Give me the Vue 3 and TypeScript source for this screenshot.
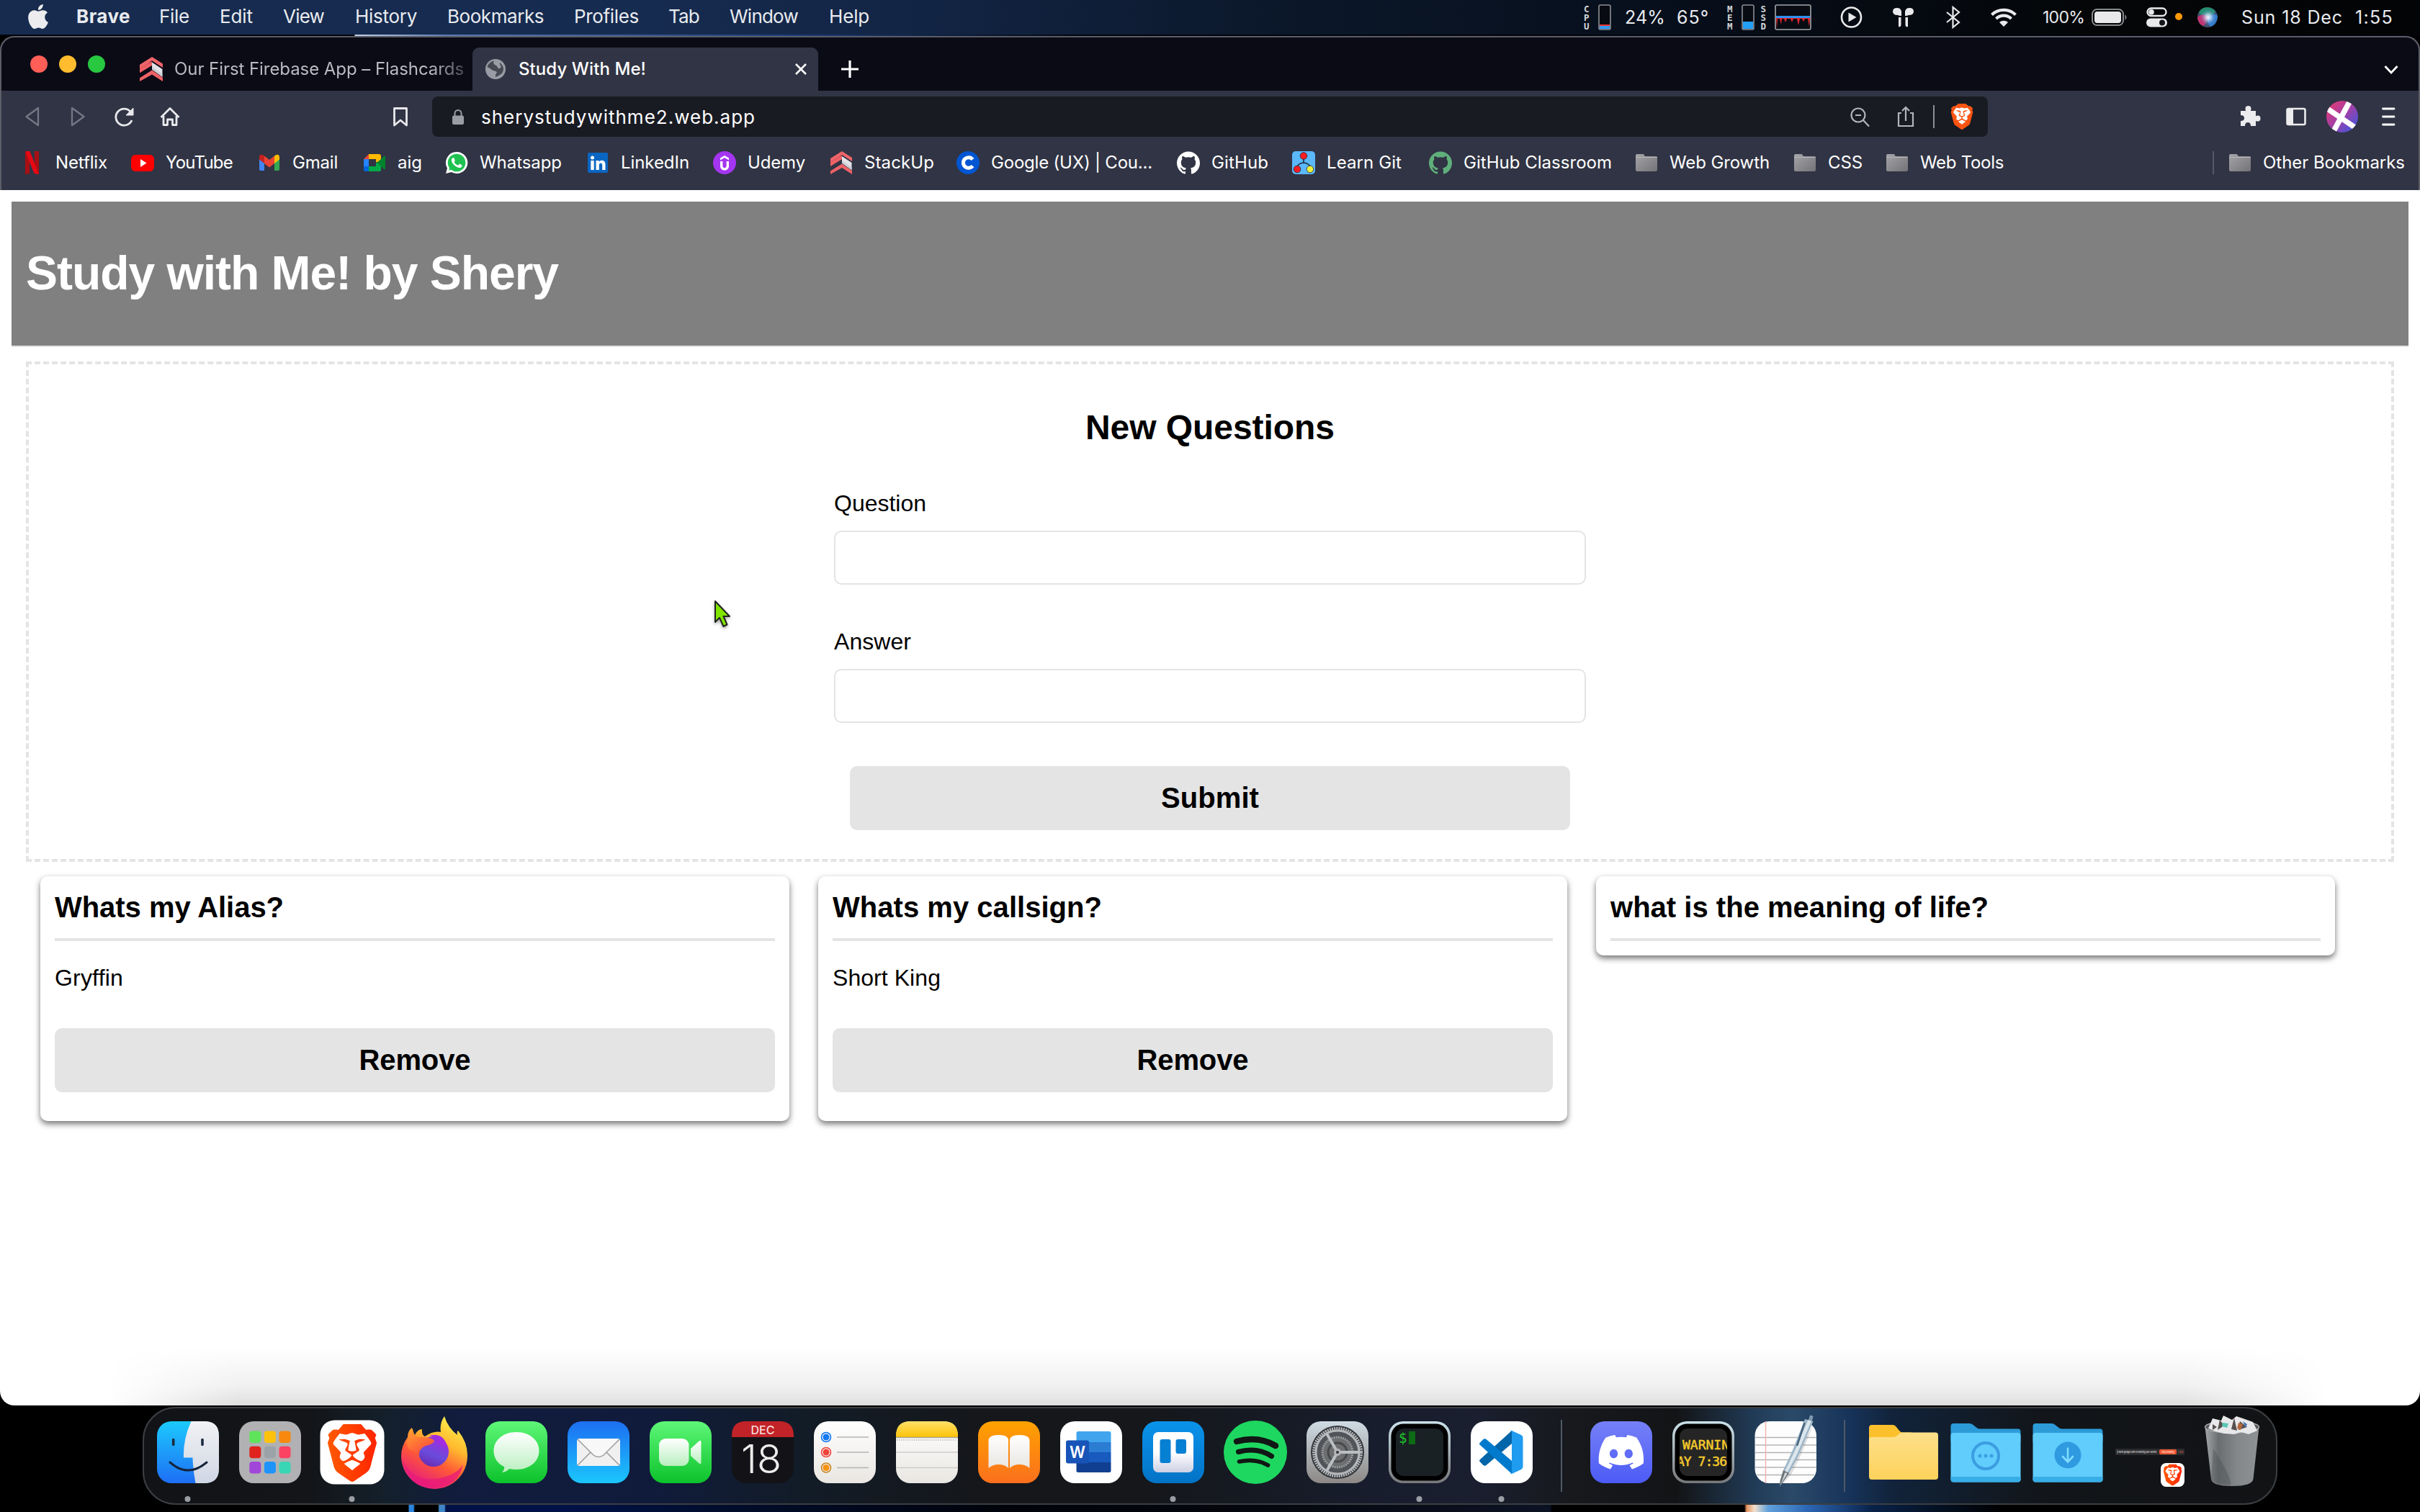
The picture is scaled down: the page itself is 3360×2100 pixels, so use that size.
<script setup lang="ts">
import type { Directive } from 'vue'

interface MenuItem { label: string; width: number; slot: number }
interface Bookmark { label: string; icon: string; width: number; slot: number }
interface Flashcard { question: string; qWidth: number; answer?: string; aWidth?: number }

// Spreads a label over the given width by adjusting its tracking.
const vFit: Directive<HTMLElement, number> = {
  mounted(el, binding) {
    const count = (el.textContent ?? '').trim().length
    const actual = el.getBoundingClientRect().width
    if (count > 0) el.style.letterSpacing = `${(binding.value - actual) / count}px`
  },
}

const menus: MenuItem[] = [
  { label: 'File', width: 42, slot: 84 },
  { label: 'Edit', width: 46, slot: 88 },
  { label: 'View', width: 57, slot: 100 },
  { label: 'History', width: 86, slot: 128 },
  { label: 'Bookmarks', width: 134, slot: 176 },
  { label: 'Profiles', width: 90, slot: 131 },
  { label: 'Tab', width: 43, slot: 85 },
  { label: 'Window', width: 95, slot: 138 },
  { label: 'Help', width: 56, slot: 80 },
]

const bookmarks: Bookmark[] = [
  { label: 'Netflix', icon: 'netflix', width: 72, slot: 153 },
  { label: 'YouTube', icon: 'youtube', width: 93, slot: 176 },
  { label: 'Gmail', icon: 'gmail', width: 63, slot: 146 },
  { label: 'aig', icon: 'meet', width: 34, slot: 114 },
  { label: 'Whatsapp', icon: 'whatsapp', width: 114, slot: 196 },
  { label: 'LinkedIn', icon: 'linkedin', width: 95, slot: 176 },
  { label: 'Udemy', icon: 'udemy', width: 80, slot: 162 },
  { label: 'StackUp', icon: 'stackup', width: 97, slot: 176 },
  { label: 'Google (UX) | Cou...', icon: 'coursera', width: 224, slot: 306 },
  { label: 'GitHub', icon: 'github', width: 79, slot: 160 },
  { label: 'Learn Git', icon: 'learngit', width: 104, slot: 190 },
  { label: 'GitHub Classroom', icon: 'classroom', width: 206, slot: 286 },
  { label: 'Web Growth', icon: 'folder', width: 139, slot: 220 },
  { label: 'CSS', icon: 'folder', width: 48, slot: 128 },
  { label: 'Web Tools', icon: 'folder', width: 116, slot: 200 },
]

const cards: Flashcard[] = [
  { question: 'Whats my Alias?', qWidth: 318, answer: 'Gryffin', aWidth: 95 },
  { question: 'Whats my callsign?', qWidth: 374, answer: 'Short King', aWidth: 150 },
  { question: 'what is the meaning of life?', qWidth: 525 },
]

const tiles = [
  ['#5fe35a', '#fdc20d', '#f7890f'],
  ['#e0231d', '#9aa3a8', '#fb4262'],
  ['#a046d8', '#1e94fb', '#38d6b4'],
]
</script>

<template>
  <div class="desktop">
    <!-- shared glyphs -->
    <svg class="defs" width="0" height="0" aria-hidden="true">
      <defs>
        <linearGradient id="gGreen" x1="0" y1="0" x2="0" y2="1"><stop offset="0" stop-color="#5ef777" /><stop offset="1" stop-color="#0cc22b" /></linearGradient>
        <linearGradient id="gWhite" x1="0" y1="0" x2="0" y2="1"><stop offset="0" stop-color="#fff" /><stop offset="1" stop-color="#e9e6e2" /></linearGradient>
        <linearGradient id="gBubble" x1="0" y1="0" x2="0" y2="1"><stop offset="0" stop-color="#fff" /><stop offset="1" stop-color="#b9efbf" /></linearGradient>
        <linearGradient id="gMail" x1="0" y1="0" x2="0" y2="1"><stop offset="0" stop-color="#1d6ff2" /><stop offset="1" stop-color="#1bc6fd" /></linearGradient>
        <linearGradient id="gFinder" x1="0" y1="0" x2="0" y2="1"><stop offset="0" stop-color="#1ccafd" /><stop offset="1" stop-color="#1e6ef5" /></linearGradient>
        <linearGradient id="gFace" x1="0" y1="0" x2="0" y2="1"><stop offset="0" stop-color="#f2f2f4" /><stop offset="1" stop-color="#cfd6e4" /></linearGradient>
        <linearGradient id="gLion" x1="0" y1="0" x2="1" y2="0"><stop offset="0" stop-color="#ff5a00" /><stop offset="1" stop-color="#ff2300" /></linearGradient>
        <linearGradient id="gFox" x1=".8" y1="0" x2=".3" y2="1"><stop offset="0" stop-color="#fff44f" /><stop offset=".35" stop-color="#ffb92e" /><stop offset=".62" stop-color="#ff5a36" /><stop offset="1" stop-color="#e31587" /></linearGradient>
        <linearGradient id="gFoxHead" x1="0" y1="0" x2=".6" y2="1"><stop offset="0" stop-color="#ffa52e" /><stop offset="1" stop-color="#ff4a3d" /></linearGradient>
        <linearGradient id="gGlobe" x1=".7" y1="0" x2=".3" y2="1"><stop offset="0" stop-color="#a32be0" /><stop offset=".6" stop-color="#6a4bdc" /><stop offset="1" stop-color="#6a2bb0" /></linearGradient>
        <linearGradient id="gBooks" x1="0" y1="0" x2="0" y2="1"><stop offset="0" stop-color="#ffa200" /><stop offset="1" stop-color="#fb6f1d" /></linearGradient>
        <linearGradient id="gNotes" x1="0" y1="0" x2="0" y2="1"><stop offset="0" stop-color="#ffe06a" /><stop offset="1" stop-color="#fcc307" /></linearGradient>
        <linearGradient id="gTrello" x1="0" y1="0" x2="0" y2="1"><stop offset="0" stop-color="#0a93ea" /><stop offset="1" stop-color="#0273c6" /></linearGradient>
        <linearGradient id="gBoard" x1="0" y1="0" x2="0" y2="1"><stop offset=".5" stop-color="#fff" /><stop offset="1" stop-color="#cdd0e4" /></linearGradient>
        <linearGradient id="gMetal" x1="0" y1="0" x2="0" y2="1"><stop offset="0" stop-color="#cfdbe3" /><stop offset="1" stop-color="#8c8886" /></linearGradient>
        <linearGradient id="gRim" x1="0" y1="0" x2="0" y2="1"><stop offset="0" stop-color="#cbe2ea" /><stop offset="1" stop-color="#77787a" /></linearGradient>
        <linearGradient id="gDiscord" x1="0" y1="0" x2="0" y2="1"><stop offset="0" stop-color="#7680f8" /><stop offset="1" stop-color="#4c5bf5" /></linearGradient>
        <linearGradient id="gYellow" x1="0" y1="0" x2="0" y2="1"><stop offset="0" stop-color="#fee08a" /><stop offset="1" stop-color="#fdd25b" /></linearGradient>
        <linearGradient id="gBin" x1="0" y1="0" x2="1" y2="0"><stop offset="0" stop-color="#a3a6a8" /><stop offset=".25" stop-color="#6a6e71" /><stop offset=".6" stop-color="#84888a" /><stop offset="1" stop-color="#8f9294" /></linearGradient>
        <linearGradient id="gDir" x1="0" y1="0" x2="1" y2="1"><stop offset="0" stop-color="#a5a5a9" /><stop offset="1" stop-color="#737377" /></linearGradient>
        <linearGradient id="gAvatar" x1="0" y1="0" x2="1" y2="1"><stop offset="0" stop-color="#f0386b" /><stop offset=".5" stop-color="#a040a8" /><stop offset="1" stop-color="#2c5be8" /></linearGradient>
        <radialGradient id="gSiri"><stop offset="0" stop-color="#fff" stop-opacity=".95" /><stop offset=".35" stop-color="#cfe4fa" stop-opacity=".7" /><stop offset="1" stop-color="#3c62b0" stop-opacity="0" /></radialGradient>
      </defs>
      <symbol id="lion" viewBox="0 0 24 24">
        <path d="M15.68 0l2.096 2.38s1.84-.512 2.709.358c.868.87 1.584 1.638 1.584 1.638l-.562 1.381.715 2.047s-2.104 7.98-2.35 8.955c-.486 1.919-.818 2.66-2.198 3.633-1.38.972-3.884 2.66-4.293 2.916-.409.256-.92.692-1.38.692-.46 0-.97-.436-1.38-.692a185.796 185.796 0 01-4.293-2.916c-1.38-.973-1.712-1.714-2.197-3.633-.247-.975-2.351-8.955-2.351-8.955l.715-2.047-.562-1.381s.716-.768 1.585-1.638c.868-.87 2.708-.358 2.708-.358L8.321 0h7.36zm-3.679 14.936c-.14 0-1.038.317-1.758.69-.72.373-1.242.637-1.409.742-.167.104-.065.301.087.409.152.107 2.194 1.69 2.393 1.866.198.175.489.464.687.464.198 0 .49-.29.688-.464.198-.175 2.24-1.759 2.392-1.866.152-.108.254-.305.087-.41-.167-.104-.689-.368-1.41-.741-.72-.373-1.617-.69-1.757-.69zm0-11.278s-.409.001-1.022.206-1.278.46-1.584.46c-.307 0-2.581-.434-2.581-.434S4.119 7.152 4.119 7.849c0 .697.339.881.68 1.243l2.02 2.149c.192.203.59.511.356 1.066-.235.555-.58 1.26-.196 1.977.384.716 1.042 1.194 1.464 1.115.421-.08 1.412-.598 1.776-.834.364-.237 1.518-1.19 1.518-1.554 0-.365-1.193-1.02-1.413-1.168-.22-.15-1.226-.725-1.247-.95-.02-.227-.012-.293.284-.851.297-.559.831-1.304.742-1.8-.089-.495-.95-.753-1.565-.986-.615-.232-1.799-.671-1.947-.74-.148-.068-.11-.133.339-.175.448-.043 1.719-.212 2.292-.052.573.16 1.552.403 1.632.532.079.13.149.134.067.579-.081.445-.5 2.581-.541 2.96-.04.38-.12.63.288.724.409.094 1.097.256 1.333.256s.924-.162 1.333-.256c.408-.093.329-.344.288-.723-.04-.38-.46-2.516-.541-2.961-.082-.445-.012-.45.067-.579.08-.129 1.059-.372 1.632-.532.573-.16 1.845.009 2.292.052.449.042.487.107.339.175-.148.069-1.332.508-1.947.74-.615.233-1.476.49-1.565.986-.09.496.445 1.241.742 1.8.297.558.304.624.284.85-.02.226-1.026.802-1.247.95-.22.15-1.413.804-1.413 1.169 0 .364 1.154 1.317 1.518 1.554.364.236 1.355.755 1.776.834.422.079 1.08-.4 1.464-1.115.384-.716.039-1.422-.195-1.977-.235-.555.163-.863.355-1.066l2.02-2.149c.341-.362.68-.546.68-1.243 0-.697-2.695-3.96-2.695-3.96s-2.274.436-2.58.436c-.307 0-.972-.256-1.585-.461-.613-.205-1.022-.206-1.022-.206z" />
      </symbol>
      <symbol id="i-netflix" viewBox="0 0 32 32"><path fill="#a80f14" d="M6 0h6v31l-6 1zM19 0h6v32l-6-1z" /><path fill="#e50914" d="M6 0h6.5L25 32l-6.5-1z" /></symbol>
      <symbol id="i-youtube" viewBox="0 0 32 32"><rect y="5" width="32" height="23" rx="6" fill="#f00" /><path d="M13 11l8.500 5.500L13 22z" fill="#fff" /></symbol>
      <symbol id="i-gmail" viewBox="0 0 32 32"><path d="M2 8v17q0 2 2 2h5V12z" fill="#4285f4" /><path d="M30 8v17q0 2-2 2h-5V12z" fill="#34a853" /><path d="M23 6.500v10.500l7-5.500V9q0-6-5.500-3.500z" fill="#fbbc04" /><path d="M2 9v2.500L9 17V6.500L7.500 5.500Q2 3 2 9z" fill="#c5221f" /><path d="M9 6.500l7 5.500 7-5.500V17l-7 5.500L9 17z" fill="#ea4335" /></symbol>
      <symbol id="i-meet" viewBox="0 0 32 32"><path d="M1 11h7v11H1z" fill="#2684fc" /><path d="M8 4v7H1z" fill="#ea4335" /><path d="M8 4h14q3 0 3 3v9l-7-1v-4H8z" fill="#ffba00" /><path d="M8 21h10v-5l7-2v12q0 2-3 2H8z" fill="#00ac47" /><path d="M1 21h7v7H3q-2 0-2-2z" fill="#0066da" /><path d="M25 11l4-4q2-1 2 1v16q0 2-2 1l-4-4-6-5z" fill="#00832d" /></symbol>
      <symbol id="i-whatsapp" viewBox="0 0 32 32"><path d="M16 1a15 15 0 0 0-13 22.500L1 31l7.800-2A15 15 0 1 0 16 1z" fill="#fff" /><circle cx="16" cy="16" r="12.300" fill="#1fc251" /><path d="M5 27l1.500-5 3 3z" fill="#1fc251" /><path transform="translate(1.500 1.500) scale(1.220)" d="M17.472 14.382c-.297-.149-1.758-.867-2.030-.967-.273-.099-.471-.148-.67.15-.197.297-.767.966-.94 1.164-.173.199-.347.223-.644.075-.297-.15-1.255-.463-2.390-1.475-.883-.788-1.480-1.761-1.653-2.059-.173-.297-.018-.458.13-.606.134-.133.298-.347.446-.52.149-.174.198-.298.298-.497.099-.198.05-.371-.025-.52-.075-.149-.669-1.612-.916-2.207-.242-.579-.487-.5-.669-.51-.173-.008-.371-.01-.57-.01-.198 0-.52.074-.792.372-.272.297-1.040 1.016-1.040 2.479 0 1.462 1.065 2.875 1.213 3.074.149.198 2.096 3.200 5.077 4.487.709.306 1.262.489 1.694.625.712.227 1.360.195 1.871.118.571-.085 1.758-.719 2.006-1.413.248-.694.248-1.289.173-1.413-.074-.124-.272-.198-.57-.347" fill="#fff" /></symbol>
      <symbol id="i-linkedin" viewBox="0 0 32 32"><rect x="2" y="2" width="28" height="28" rx="2" fill="#0a66c2" /><circle cx="8.500" cy="9" r="2.500" fill="#fff" /><path d="M6.300 13h4.400v13H6.300zM13.500 13h4.100v1.800c2.200-3.500 8.900-2.900 8.900 3.200v8h-4.300v-7c0-3.600-4.400-3.300-4.400 0v7h-4.300z" fill="#fff" /></symbol>
      <symbol id="i-udemy" viewBox="0 0 32 32"><circle cx="16" cy="16" r="16" fill="#a435f0" /><path d="M10 9.500L16 6l6 3.500v3L16 9l-6 3.500zM10 14h3.400v6.500c0 3.600 5.200 3.600 5.200 0V14H22v6.500c0 8-12 8-12 0z" fill="#fff" /></symbol>
      <symbol id="i-stackup" viewBox="0 0 32 32"><path d="M1 10.500v10L17 10.500V6z" fill="#d9525a" /><path d="M1 10L17 0l14 9v5L17 5 1 15z" fill="#f0656a" /><path d="M1 21v-5L17 6.500v4.500z" fill="#ee6267" /><path d="M17 7l13.500 9v10L17 16.500z" fill="#e2e2e7" /><path d="M17 13l13.500 9v4L17 16.500z" fill="#cfcfd6" /><path d="M1 27.500L17 17.500l14 9.500v5L17 23 1 32z" fill="#ee6267" /></symbol>
      <symbol id="i-coursera" viewBox="0 0 32 32"><circle cx="16" cy="16" r="16" fill="#0056d2" /><path d="M22.500 11.500a7.300 7.300 0 1 0 0 9" fill="none" stroke="#fff" stroke-width="5" /></symbol>
      <symbol id="octocat" viewBox="0 0 24 24"><path d="M12 .297c-6.630 0-12 5.373-12 12 0 5.303 3.438 9.800 8.205 11.385.6.113.82-.258.82-.577 0-.285-.01-1.040-.015-2.040-3.338.724-4.042-1.610-4.042-1.610C4.422 18.070 3.633 17.700 3.633 17.700c-1.087-.744.084-.729.084-.729 1.205.084 1.838 1.236 1.838 1.236 1.070 1.835 2.809 1.305 3.495.998.108-.776.417-1.305.76-1.605-2.665-.3-5.466-1.332-5.466-5.930 0-1.310.465-2.380 1.235-3.220-.135-.303-.54-1.523.105-3.176 0 0 1.005-.322 3.300 1.230.96-.267 1.980-.399 3-.405 1.020.006 2.040.138 3 .405 2.280-1.552 3.285-1.230 3.285-1.230.645 1.653.24 2.873.12 3.176.765.84 1.230 1.910 1.230 3.220 0 4.610-2.805 5.625-5.475 5.920.42.36.81 1.096.81 2.220 0 1.606-.015 2.896-.015 3.286 0 .315.21.69.825.57C20.565 22.092 24 17.592 24 12.297c0-6.627-5.373-12-12-12" /></symbol>
      <symbol id="i-github" viewBox="0 0 32 32"><use href="#octocat" width="32" height="32" fill="#fff" /></symbol>
      <symbol id="i-classroom" viewBox="0 0 32 32"><use href="#octocat" width="32" height="32" fill="#5faf7b" /></symbol>
      <symbol id="i-learngit" viewBox="0 0 32 32"><rect width="32" height="32" rx="5" fill="#5bb8fb" /><path d="M16 10v7M16 16q-8 1-9 6M16 16q8 1 9 6" fill="none" stroke="#1c2c3c" stroke-width="1.600" /><g stroke="#33202a" stroke-width=".8"><circle cx="16" cy="6.500" r="4.800" fill="#f61d22" /><circle cx="7" cy="25" r="4.800" fill="#f61d22" /><circle cx="25" cy="25" r="4.800" fill="#ecf23c" /></g></symbol>
      <symbol id="i-folder" viewBox="0 0 32 32"><path d="M1 6q0-2 2-2h8q2 0 2 2l1 1h15q2 0 2 2v17q0 2-2 2H3q-2 0-2-2z" fill="url(#gDir)" /><path d="M1 8.500h30" stroke="#b6b6ba" stroke-width="1" /></symbol>
    </svg>

    <!-- macOS menu bar -->
    <header class="menubar">
      <svg class="apple" width="34" height="34" viewBox="0 0 24 24"><path fill="#ececee" d="M12.152 6.896c-.948 0-2.415-1.078-3.960-1.040-2.040.027-3.910 1.183-4.961 3.014-2.117 3.675-.546 9.103 1.519 12.090 1.013 1.454 2.208 3.090 3.792 3.039 1.520-.065 2.090-.987 3.935-.987 1.831 0 2.350.987 3.960.948 1.637-.026 2.676-1.480 3.676-2.948 1.156-1.688 1.636-3.325 1.662-3.415-.039-.013-3.182-1.221-3.220-4.857-.026-3.040 2.480-4.494 2.597-4.559-1.429-2.090-3.623-2.324-4.390-2.376-2-.156-3.675 1.090-4.610 1.090zM15.530 3.830c.843-1.012 1.400-2.427 1.245-3.830-1.207.052-2.662.805-3.532 1.818-.78.896-1.454 2.338-1.273 3.714 1.338.104 2.715-.688 3.559-1.701" /></svg>
      <strong class="appname"><span v-fit="75">Brave</span></strong>
      <div v-for="m in menus" :key="m.label" :style="{ width: m.slot + 'px' }"><span v-fit="m.width">{{ m.label }}</span></div>
      <div class="status">
        <svg class="meters" width="42" height="48" viewBox="0 0 42 48">
          <g class="stack"><text x="1" y="16.500">C</text><text x="1" y="29">P</text><text x="1" y="41">U</text></g>
          <rect x="22" y="7" width="16" height="34" rx="2" fill="#080b12" stroke="#8d8f94" stroke-width="1.600" />
          <path d="M23 36h14v4H23z" fill="#2d9bf4" /><path d="M23 34h14v2H23z" fill="#e8342e" />
        </svg>
        <span class="cpu"><span v-fit="56">24%</span></span>
        <span class="temp"><span v-fit="45">65°</span></span>
        <svg width="120" height="48" viewBox="0 0 120 48">
          <g class="stack"><text x="0" y="16.500">M</text><text x="0" y="29">E</text><text x="0" y="41">M</text><text x="46.500" y="16.500">S</text><text x="46.500" y="29">S</text><text x="46.500" y="41">D</text></g>
          <rect x="21" y="7" width="16" height="34" rx="2" fill="#080b12" stroke="#8d8f94" stroke-width="1.600" />
          <path d="M22 30h14v10H22z" fill="#22a0f8" />
          <rect x="67" y="7" width="49" height="34" rx="2" fill="#080b12" stroke="#a5a6aa" stroke-width="1.600" />
          <path d="M68 24h47l-1 13-2-11h-4l-2 4-2-4h-3l-2 9-2-9h-5l-2 5-2-5h-5l-2 5-2-5h-3l-1 8-2-8h-3l-1 13z" fill="#e8262c" />
          <path d="M68 22h47v3H68z" fill="#2d90f0" />
        </svg>
        <svg class="glyphs" width="260" height="48" viewBox="2550 0 260 48" fill="#e9e9eb">
          <circle cx="2570.500" cy="24" r="13.500" fill="none" stroke="#e9e9eb" stroke-width="2.600" /><path d="M2566.500 17.500l11 6.500-11 6.500z" />
          <path d="M2628 16q0-5 6-5 5 0 6 5v6q-4 0-5-1-7 0-7-5zM2657 16q0-5-6-5-5 0-6 5v6q4 0 5-1 7 0 7-5zM2636 24h3.500v10q0 4-3.500 3zM2649 24h-3.500v10q0 4 3.500 3z" />
          <path d="M2703 17l17 14-8.500 7V10l8.500 7-17 14" fill="none" stroke="#e9e9eb" stroke-width="2.200" />
          <path d="M2765.500 20.500a24 24 0 0 1 33 0M2771.500 26a15 15 0 0 1 21 0" fill="none" stroke="#e9e9eb" stroke-width="4.200" /><path d="M2776 31a9 9 0 0 1 12 0l-6 6z" />
        </svg>
        <span class="pct"><span v-fit="58">100%</span></span>
        <svg width="205" height="48" viewBox="2900 0 205 48" fill="#e9e9eb">
          <rect x="2905" y="13" width="43" height="22" rx="6.500" fill="none" stroke="#88898c" stroke-width="2" /><rect x="2908" y="16" width="37" height="16" rx="4" /><path d="M2950.500 20q4 4 0 8z" fill="#88898c" />
          <rect x="2981.500" y="11.500" width="26" height="10.500" rx="5.200" fill="none" stroke="#e9e9eb" stroke-width="2.400" /><circle cx="2987" cy="16.700" r="3.800" /><rect x="2980" y="25.500" width="29" height="12" rx="6" /><circle cx="3002" cy="31.500" r="4" fill="#14161a" />
          <circle cx="3025" cy="23" r="5" fill="#fd9a0a" />
          <circle cx="3065" cy="24" r="14" fill="#44506e" /><path d="M3053 17q5-9 16-6 6 2 7 6-8 6-12 6-8 0-11-6z" fill="#22906f" /><path d="M3051 24q6-6 14-2-1 11-6 14-7-3-8-12z" fill="#c8306e" /><path d="M3065 24q9-8 14-2-1 12-10 15-5-5-4-13z" fill="#2f7fd0" /><circle cx="3066" cy="24" r="12" fill="url(#gSiri)" />
        </svg>
        <span class="date"><span v-fit="141">Sun 18 Dec</span></span>
        <span class="clock"><span v-fit="53">1:55</span></span>
      </div>
    </header>
    <div class="hairline"></div>

    <!-- browser window -->
    <main class="window">
      <div class="tabstrip">
        <i class="light red"></i><i class="light amber"></i><i class="light green"></i>
        <div class="tab idle">
          <svg width="34" height="34" viewBox="0 0 32 32"><use href="#i-stackup" width="32" height="32" /></svg>
          <div class="clip"><span v-fit="402">Our First Firebase App – Flashcards</span></div>
        </div>
        <div class="tab active">
          <svg width="28" height="28" viewBox="0 0 28 28"><circle cx="14" cy="14" r="14" fill="#9a9ca5" /><path d="M12 2.500q-2 4 1 5.500t4 3-2 4-6 0-6.500-4Q4.500 4 12 2.500zM20 5q5 4 5 9t-5 8q-3 2-6 3-1-3 1-5t-1-3-3-2l3-2h5q4-1 2-4t-1-4z" fill="#31343f" opacity=".8" /></svg>
          <span class="tabtitle"><span v-fit="177">Study With Me!</span></span>
          <svg class="close" width="18" height="18" viewBox="0 0 18 18"><path d="M2 2l14 14M16 2L2 16" stroke="#fff" stroke-width="2.600" /></svg>
        </div>
        <svg class="plus" width="24" height="24" viewBox="0 0 24 24"><path d="M12 0v24M0 12h24" stroke="#fff" stroke-width="3.200" /></svg>
        <svg class="chevron" width="20" height="14" viewBox="0 0 20 14"><path d="M1.500 2l8.500 9 8.500-9" fill="none" stroke="#fff" stroke-width="2.800" /></svg>
      </div>

      <div class="toolbar">
        <svg class="nav" width="600" height="64" viewBox="0 130 600 64" fill="none" stroke="#e8e8ec" stroke-width="2.800" stroke-linejoin="round">
          <path d="M53 150v24L36.500 162zM100 150v24l16.500-12z" stroke="#757884" stroke-width="2.300" />
          <path d="M183 167a11.500 11.500 0 1 1-2-12" /><path d="M185 150v10h-10z" fill="#e8e8ec" stroke-width="1" />
          <path d="M223.500 163L236 150.500 248.500 163M227 161v12.500h5.500V166h7v7.500h5.500V161" />
          <path d="M547.500 150.500h17V174l-8.500-7-8.500 7z" />
        </svg>
        <div class="omnibox">
          <svg width="16" height="21" viewBox="0 0 16 21"><rect y="8.500" width="16" height="12.500" rx="2" fill="#9b9da4" /><path d="M3.500 9V5.500a4.500 4.500 0 0 1 9 0V9" fill="none" stroke="#9b9da4" stroke-width="2" /></svg>
          <span class="url"><span v-fit="381">sherystudywithme2.web.app</span></span>
          <svg class="omni-actions" width="180" height="56" viewBox="2565 134 180 56" fill="none" stroke="#b3b5ba" stroke-width="2.200">
            <circle cx="2580" cy="160" r="9.500" /><path d="M2576 160h8M2587 167l8 8.500" /><path d="M2640 157h-4v18h20v-18h-4M2646 168v-18M2641 154l5-5 5 5" />
            <path d="M2685 146v32" stroke="#8d8f96" stroke-width="2" />
            <path d="M2715 144h18l6 9-1 4 1 2-5 14q-2 3-5 5l-5 3-5-3q-3-2-5-5l-5-14 1-2-1-4z" fill="#fff" stroke="none" transform="translate(2724 162) scale(.88) translate(-2724 -162)" />
            <use href="#lion" x="2706" y="144" width="36" height="36" fill="#fb5412" stroke="none" />
          </svg>
        </div>
        <svg class="tools" width="240" height="64" viewBox="3100 130 240 64" fill="#ececef">
          <path d="M3111 154h7q-2-7 3.500-7t3.500 7h7v7q6.500-2 6.500 3.500t-6.500 3.500v7h-7q0-5-4-5t-4 5h-6v-7q5 0 5-4t-5-4z" />
          <rect x="3175.500" y="151" width="25" height="22" rx="2" fill="none" stroke="#ececef" stroke-width="2.600" /><path d="M3176 151h8v22h-8z" />
          <clipPath id="face"><circle cx="3252" cy="162" r="22" /></clipPath>
          <circle cx="3252" cy="162" r="22" fill="url(#gAvatar)" /><g clip-path="url(#face)"><path d="M3230 150l44 30M3264 138l-26 48" stroke="#fff" stroke-width="7.500" /></g>
          <path d="M3308.500 151h15.500M3308.500 162h15.500M3308.500 173h15.500" stroke="#fff" stroke-width="2.800" stroke-linecap="round" />
        </svg>
      </div>

      <nav class="bookmarks">
        <div v-for="b in bookmarks" :key="b.label" class="bookmark" :style="{ width: b.slot + 'px' }">
          <svg width="32" height="32" viewBox="0 0 32 32"><use :href="'#i-' + b.icon" width="32" height="32" /></svg>
          <span v-fit="b.width">{{ b.label }}</span>
        </div>
        <div class="bookmark other">
          <svg width="32" height="32" viewBox="0 0 32 32"><use href="#i-folder" width="32" height="32" /></svg>
          <span v-fit="197">Other Bookmarks</span>
        </div>
      </nav>

      <!-- page -->
      <section class="page">
        <div class="banner"><h1><span v-fit="739">Study with Me! by Shery</span></h1></div>
        <div class="form">
          <h2><span v-fit="346">New Questions</span></h2>
          <div class="fields">
            <label><span v-fit="128">Question</span></label>
            <div class="input"></div>
            <label><span v-fit="107">Answer</span></label>
            <div class="input"></div>
          </div>
          <button class="submit"><span v-fit="136">Submit</span></button>
        </div>
        <div class="cards">
          <article v-for="c in cards" :key="c.question" class="card" :class="{ bare: !c.answer }">
            <h3><span v-fit="c.qWidth">{{ c.question }}</span></h3>
            <template v-if="c.answer">
              <p><span v-fit="c.aWidth ?? 0">{{ c.answer }}</span></p>
              <button><span v-fit="155">Remove</span></button>
            </template>
          </article>
        </div>
      </section>
      <svg class="cursor" width="30" height="42" viewBox="0 0 30 42"><path d="M2 2v29l6-6 5.500 12 5-2.500L13.500 23H22z" fill="#80e600" stroke="#222" stroke-width="2" stroke-linejoin="round" /></svg>
    </main>

    <!-- dock -->
    <div class="dockrow">
      <div class="dock">
        <svg class="cell" viewBox="0 2 114 132">
          <rect x="14" y="20" width="86" height="86" rx="20" fill="url(#gFinder)" />
          <path d="M61.500 20H80q20 0 20 20v46q0 20-20 20H67.500Q64 88 63.500 70.500H51Q50 45 61.500 20z" fill="url(#gFace)" />
          <path d="M36.700 45.500v7M77 45.500v7" stroke="#1c2b40" stroke-width="3.600" stroke-linecap="round" /><path d="M32 77q25 22 51 0" fill="none" stroke="#14233a" stroke-width="3" stroke-linecap="round" />
          <circle cx="56.500" cy="128" r="4" class="dot" />
        </svg>
        <svg class="cell" viewBox="0 2 114 132">
          <rect x="14" y="20" width="86" height="86" rx="20" fill="#b1b1b3" />
          <template v-for="(row, r) in tiles" :key="r"><rect v-for="(t, c) in row" :key="t" :x="28.300 + c * 20.600" :y="33.500 + r * 21.200" width="16" height="16.500" rx="4" :fill="t" /></template>
        </svg>
        <svg class="cell" viewBox="0 2 114 132">
          <rect x="12.500" y="18.500" width="89" height="89" rx="20" fill="#fff" /><use href="#lion" x="17" y="24" width="80" height="80" fill="url(#gLion)" /><circle cx="56.500" cy="128" r="4" class="dot" />
        </svg>
        <svg class="cell" viewBox="0 2 114 132">
          <path d="M71 13q5 16 18 26-1-5 1-6 13 16 13 34a46 46 0 0 1-92 2q0-15 9-27 0-9 6-13 1 7 4 10 4-8 10-8-1 8 4 10 12-8 22-6-2-12 5-22z" fill="url(#gFox)" />
          <circle cx="56" cy="62" r="21" fill="url(#gGlobe)" />
          <path d="M50 40q22-6 26 20-2-6-8-5-4-8-12-6 4-2 8 0-4-7-14-9z" fill="#a32be0" />
          <path d="M20 42l7-12q1 9 6 12h10l10 2q4 2 4 4-4 5-12 6-10 4-9 14-8-8-13-8-6-8-3-18z" fill="url(#gFoxHead)" />
          <path d="M13 74q14 30 46 26 28-4 38-20-8 32-40 32Q22 110 13 74z" fill="#e8197b" opacity=".75" />
        </svg>
        <svg class="cell" viewBox="0 2 114 132">
          <rect x="14" y="20" width="86" height="86" rx="20" fill="url(#gGreen)" /><path d="M57 35c18 0 31.500 11 31.500 26S75 87 57 87q-6 0-10-1-4 4.500-10 5 4-4 3-8c-9-4-14.500-12-14.500-22 0-15 13.500-26 31.500-26z" fill="url(#gBubble)" />
        </svg>
        <svg class="cell" viewBox="0 2 114 132">
          <rect x="14" y="20" width="86" height="86" rx="20" fill="url(#gMail)" /><rect x="27" y="44" width="60" height="38" rx="3.500" fill="#f0f0f1" /><path d="M28 81l20-20M86 81L66 61" stroke="#9c9c9e" stroke-width="1.500" /><path d="M28 45l22 22q7 5 14 0l22-22" fill="#f8f8f8" stroke="#9c9c9e" stroke-width="1.500" />
        </svg>
        <svg class="cell" viewBox="0 2 114 132">
          <rect x="14" y="20" width="86" height="86" rx="20" fill="url(#gGreen)" /><rect x="27" y="44" width="41.500" height="38" rx="9" fill="url(#gBubble)" /><path d="M71 58l11-10q3.500-3 3.500 1v28q0 4-3.500 1L71 68z" fill="url(#gBubble)" />
        </svg>
        <svg class="cell" viewBox="0 2 114 132">
          <rect x="14" y="20" width="86" height="86" rx="20" fill="#131317" /><path d="M14 42v-2q0-20 20-20h46q20 0 20 20v2z" fill="#c22328" />
          <text x="57" y="37.500" text-anchor="middle" font-size="16" font-weight="500" fill="#f6dcdc" textLength="33">DEC</text><text x="27" y="92" font-size="55" font-weight="300" fill="#ececec" textLength="56" lengthAdjust="spacingAndGlyphs">18</text>
        </svg>
        <svg class="cell" viewBox="0 2 114 132">
          <rect x="14" y="20" width="86" height="86" rx="20" fill="url(#gWhite)" />
          <g fill="none" stroke-width="1.600"><circle cx="31" cy="42" r="6.500" stroke="#1478f0" /><circle cx="31" cy="63" r="6.500" stroke="#ef443b" /><circle cx="31" cy="84.500" r="6.500" stroke="#c98420" /></g>
          <circle cx="31" cy="42" r="4.500" fill="#1478f0" /><circle cx="31" cy="63" r="4.500" fill="#ef443b" /><circle cx="31" cy="84.500" r="4.500" fill="#f7930f" /><path d="M46 42h44M46 63h44M46 84.500h44" stroke="#b4b4b6" stroke-width="1.600" />
        </svg>
        <svg class="cell" viewBox="0 2 114 132">
          <rect x="14" y="20" width="86" height="86" rx="20" fill="url(#gWhite)" /><path d="M14 42v-2q0-20 20-20h46q20 0 20 20v2z" fill="url(#gNotes)" /><path d="M14 42.500h86" stroke="#a8a48f" stroke-width="1.600" /><path d="M15 46h84" stroke="#c9c7c4" stroke-width="2" stroke-dasharray="1.500 1.500" /><path d="M14 63h86M14 84.500h86" stroke="#cfcdca" stroke-width="1.600" />
        </svg>
        <svg class="cell" viewBox="0 2 114 132">
          <rect x="14" y="20" width="86" height="86" rx="20" fill="url(#gBooks)" /><path d="M28.500 47q0-8 14-8 13 0 13.500 7v39q-5-5-13.500-5-8 0-14 5zM85.500 47q0-8-14-8-13 0-13.500 7v39q5-5 13.500-5 8 0 14 5z" fill="url(#gWhite)" />
        </svg>
        <svg class="cell" viewBox="0 2 114 132">
          <rect x="14" y="20" width="86" height="86" rx="20" fill="#fff" /><path d="M36.500 49V36.500q0-2.500 2.500-2.500h43q2.500 0 2.500 2.500V49z" fill="#41a5ee" /><path d="M36.500 49h48v14h-48z" fill="#2b7cd3" /><path d="M36.500 63h48v14h-48z" fill="#185abd" /><path d="M36.500 77h48v11.500q0 2.500-2.500 2.500H39q-2.500 0-2.500-2.500z" fill="#103f91" /><rect x="22" y="46.500" width="32" height="32" rx="3" fill="#1853b8" /><text x="38" y="71" text-anchor="middle" font-size="23" font-weight="600" fill="#fff" textLength="22" lengthAdjust="spacingAndGlyphs">W</text>
        </svg>
        <svg class="cell" viewBox="0 2 114 132">
          <rect x="14" y="20" width="86" height="86" rx="20" fill="url(#gTrello)" /><rect x="29" y="35" width="56" height="56" rx="7" fill="url(#gBoard)" /><rect x="38.500" y="45" width="15" height="33" rx="3" fill="#0680d2" /><rect x="60.500" y="45" width="14.500" height="20" rx="3" fill="#0680d2" /><circle cx="56.500" cy="128" r="4" class="dot" />
        </svg>
        <svg class="cell" viewBox="0 2 114 132">
          <circle cx="57" cy="63" r="44" fill="#1ed760" /><g fill="none" stroke="#111714" stroke-linecap="round"><path d="M31 48q30-8 54 6" stroke-width="8.500" /><path d="M33.500 62.500q26-7 46 6" stroke-width="7" /><path d="M34.500 76q23-5 40 5" stroke-width="5.600" /></g>
        </svg>
        <svg class="cell" viewBox="0 2 114 132">
          <rect x="14" y="20" width="86" height="86" rx="20" fill="url(#gMetal)" /><circle cx="57" cy="63" r="37" fill="#33363a" /><circle cx="57" cy="63" r="33" fill="none" stroke="#b8bcbf" stroke-width="4" stroke-dasharray="2 1.200" /><circle cx="57" cy="63" r="30" fill="#515458" stroke="#b5b8ba" stroke-width="3" /><circle cx="57" cy="63" r="21" fill="#6c6e70" stroke="#999b9d" stroke-width="3" stroke-dasharray="2 1.200" /><circle cx="57" cy="63" r="13" fill="none" stroke="#48494b" stroke-width="3" /><path d="M57 63h31M57 63L42 37M57 63L42 89" stroke="#bcbfc1" stroke-width="4" /><circle cx="57" cy="63" r="5" fill="#b4b6b8" /><circle cx="57" cy="63" r="2" fill="#33363a" />
        </svg>
        <svg class="cell" viewBox="0 2 114 132">
          <rect x="14" y="20" width="86" height="86" rx="20" fill="url(#gRim)" /><rect x="17.500" y="23.500" width="79" height="79" rx="17" fill="#000" /><rect x="24" y="30" width="66" height="66" rx="11" fill="#192124" /><text x="28" y="50" class="mono" font-size="19" fill="#1fc32b">$</text><rect x="42" y="34" width="9" height="18" fill="#0c6b14" /><circle cx="56.500" cy="128" r="4" class="dot" />
        </svg>
        <svg class="cell" viewBox="0 2 114 132">
          <rect x="14" y="20" width="86" height="86" rx="20" fill="#fff" /><path d="M26.500 76l5 5q2 1.500 4 0L71 51V33L27 73q-1.500 1.500-.5 3z" fill="#0065a9" /><path d="M26.500 50l5-5q2-1.500 4 0L71 75v18L27 53q-1.500-1.500-.5-3z" fill="#007acc" /><path d="M71 33l13 6q2.500 1.200 2.500 4v40q0 2.800-2.500 4l-13 6q-2 .5-3-1 3 2 3-2V36q0-3.500-3-2 1-1.500 3-1z" fill="#1f9cf0" /><circle cx="56.500" cy="128" r="4" class="dot" />
        </svg>
        <i class="sep wide"></i>
        <svg class="cell" viewBox="0 2 114 132">
          <rect x="14" y="20" width="86" height="86" rx="20" fill="url(#gDiscord)" /><path transform="translate(25.700 31.500) scale(2.600)" fill="#fff" d="M20.317 4.370a19.790 19.790 0 00-4.885-1.515.074.074 0 00-.079.037c-.211.375-.445.865-.608 1.249-1.845-.276-3.680-.276-5.487 0-.164-.393-.406-.874-.618-1.249a.077.077 0 00-.079-.037 19.736 19.736 0 00-4.885 1.515.070.070 0 00-.032.028C.533 9.046-.319 13.580.099 18.058a.082.082 0 00.031.056c2.053 1.508 4.041 2.423 5.993 3.029a.078.078 0 00.084-.028c.462-.630.873-1.295 1.226-1.994a.076.076 0 00-.042-.106c-.653-.248-1.274-.550-1.872-.892a.077.077 0 01-.008-.128c.126-.094.252-.192.372-.291a.074.074 0 01.078-.011c3.928 1.793 8.180 1.793 12.061 0a.074.074 0 01.079.010c.120.099.246.198.373.292a.077.077 0 01-.007.128 12.299 12.299 0 01-1.873.891.077.077 0 00-.041.107c.360.698.772 1.363 1.225 1.993a.076.076 0 00.084.029c1.961-.607 3.950-1.522 6.002-3.029a.077.077 0 00.031-.055c.500-5.177-.838-9.674-3.549-13.660a.061.061 0 00-.031-.029zM8.020 15.331c-1.183 0-2.157-1.086-2.157-2.419 0-1.333.956-2.419 2.157-2.419 1.211 0 2.176 1.095 2.157 2.419 0 1.333-.956 2.419-2.157 2.419zm7.975 0c-1.183 0-2.157-1.086-2.157-2.419 0-1.333.955-2.419 2.157-2.419 1.211 0 2.176 1.095 2.157 2.419 0 1.333-.946 2.419-2.157 2.419z" />
        </svg>
        <svg class="cell" viewBox="0 2 114 132">
          <clipPath id="screen"><rect x="24" y="30" width="66" height="66" rx="10" /></clipPath>
          <rect x="14" y="20" width="86" height="86" rx="20" fill="url(#gRim)" /><rect x="17.500" y="23.500" width="79" height="79" rx="17" fill="#000" /><rect x="24" y="30" width="66" height="66" rx="11" fill="#252525" />
          <g clip-path="url(#screen)" class="mono" font-size="18" font-weight="500" fill="#f5ca2d" stroke="#f5ca2d" stroke-width=".5"><text x="28" y="58.500" textLength="65">WARNIN</text><text x="20" y="81.500" textLength="70">AY 7:36</text></g>
        </svg>
        <svg class="cell" viewBox="0 2 114 132">
          <rect x="14.500" y="20" width="85.500" height="86" rx="20" fill="#fdfdfd" /><path d="M15 42.500h85M15 53h85M15 63.500h85M15 73.500h85M15 84h85M17 94.500h80" stroke="#b4b4b6" stroke-width="1.500" /><path d="M29.500 20v86" stroke="#f3b0b0" stroke-width="1.400" />
          <path d="M97 22L78 68 65 94 51 109l13-26z" fill="#000" opacity=".12" />
          <path d="M84 17L95.500 20 75 68 61 94 49.500 110 49.500 103 54 88 67 60z" fill="#9fb6c8" />
          <path d="M88.500 18L93 19.500 72.500 67 59 92 56 90 70 61z" fill="#dce7ee" />
          <path d="M54 88l8 4-12.500 18v-7z" fill="#6d7478" /><path d="M56.500 91l3 1.500-9 15z" fill="#d5dadd" />
          <path d="M91 11.500l4.500 1.300-1.500 6.700-5-1.300z" fill="#7f9bb2" /><path d="M83.500 22L73 54" stroke="#4a6780" stroke-width="2.600" />
        </svg>
        <i class="sep"></i>
        <svg class="cell" viewBox="0 2 114 132">
          <path d="M9 29q0-4 4-4h29q3 0 5 3l4 5q2 2.500 5 2.500h12v12H9z" fill="#fcc02c" /><path d="M9 46q0-4 4-4h29q4 0 6-2l3-2.500q2-2 5-2h45q4 0 4 4V97q0 4-4 4H13q-4 0-4-4z" fill="url(#gYellow)" />
        </svg>
        <svg class="cell" viewBox="0 2 114 132">
          <path d="M8.500 27q0-4 4-4h22q3 0 5 2l5 4q2 1.500 5 1.500h52q4 0 4 4v14h-97z" fill="#2c9bd8" /><rect x="8.500" y="36" width="97" height="68.500" rx="4" fill="#60cdfd" /><path d="M8.500 97h97v3.500q0 4-4 4h-89q-4 0-4-4z" fill="#38aee6" /><circle cx="57" cy="68" r="18" fill="none" stroke="#3c9de0" stroke-width="4" /><circle cx="49" cy="68" r="2.500" fill="#3c9de0" /><circle cx="57" cy="68" r="2.500" fill="#3c9de0" /><circle cx="65" cy="68" r="2.500" fill="#3c9de0" />
        </svg>
        <svg class="cell" viewBox="0 2 114 132">
          <path d="M8.500 27q0-4 4-4h22q3 0 5 2l5 4q2 1.500 5 1.500h52q4 0 4 4v14h-97z" fill="#2c9bd8" /><rect x="8.500" y="36" width="97" height="68.500" rx="4" fill="#60cdfd" /><path d="M8.500 97h97v3.500q0 4-4 4h-89q-4 0-4-4z" fill="#38aee6" /><circle cx="57" cy="67" r="18.500" fill="#2f9ae0" /><path d="M57 57.500v18M50 69l7 7.500 7-7.500" fill="none" stroke="#7fdcff" stroke-width="2.600" stroke-linecap="round" />
        </svg>
        <svg class="cell" viewBox="0 2 114 132">
          <rect x="9" y="58" width="96" height="9" rx="1" fill="#2b2b2e" /><text x="11" y="64" font-size="4" font-weight="600" fill="#d6d6d8" textLength="56" lengthAdjust="spacingAndGlyphs">|| meet.google.com is sharing your screen.</text><rect x="70" y="59" width="24" height="7" rx="2" fill="#ee5431" /><text x="73" y="64" font-size="4" fill="#ffe0d8" textLength="18">Stop sharing</text><text x="96.500" y="64" font-size="4" fill="#b6573f" textLength="7">Hide</text>
          <rect x="72" y="78" width="33" height="33" rx="7.500" fill="#fff" /><use href="#lion" x="73.500" y="79.500" width="30" height="30" fill="url(#gLion)" />
        </svg>
        <svg class="cell" viewBox="0 2 114 132">
          <path d="M19.500 28q18 9 37 9t38-9l-8 72q-1 10-29.500 10T28 100z" fill="url(#gBin)" /><path d="M31 58q26 40 24 50-25-1-27-8z" fill="#4c5053" opacity=".4" /><ellipse cx="57" cy="28" rx="37.500" ry="8" fill="#55585a" stroke="#a9acae" stroke-width="1.500" />
          <path d="M24 30l6-14 12 3 3-7 12 6 6-5 9 3 14 5 6 12-12 5-10-3-10 3-14-1-12-3z" fill="#e8e8ea" /><path d="M40 18l6 8-9 6zM60 15l-4 16 8 2zM68 20l10 8-12 4zM30 24l6 4-6 4z" fill="#55504f" /><path d="M44 22l8 1-2 6-7-2z" fill="#59c7b4" /><path d="M66 22l6 2-3 8-5-2z" fill="#b5683d" /><path d="M72 20l6 4-2 5z" fill="#4b77b8" />
        </svg>
      </div>
    </div>
  </div>
</template>

<style>
body { margin: 0; background: #000; }
</style>

<style scoped>
.desktop { width: 3360px; height: 2100px; overflow: hidden; display: flex; flex-direction: column; position: relative; font-family: Inter, "Noto Sans", sans-serif; color: #fff;
  background: #000 linear-gradient(90deg, #000 0 567px, #2a86dd 568px 574px, #000 576px 608px, #3f86c8 610px 617px, #001248 619px 780px, #000d2c 1000px, #00030a 1400px, #04060c 1700px, #0b1222 2140px, #0b1222 2152px, #000 2155px 2422px, #e3905c 2425px, #f2e0cc 2436px, #5fa0dc 2455px, #2c66b4 2510px, #082248 2600px, #000 2780px) 0 100% / 100% 10px no-repeat; }
.defs { position: absolute; }
span { white-space: nowrap; }
.menubar { height: 48px; flex: none; box-sizing: border-box; padding: 0 0 3px 36px; display: flex; align-items: center; font-size: 26px; color: #e9ebef; background: linear-gradient(90deg, #172b4f 0, #162b50 900px, #122443 1300px, #0b1729 1800px, #070f1c 2300px, #040608 2900px, #030405 3360px); }
.apple { flex: none; }
.menubar > div { flex: none; }
.appname { width: 115px; padding-left: 36px; font-weight: 700; flex: none; }
.menubar .status { flex: 1; height: 48px; display: flex; align-items: center; padding-left: 0; margin-left: 0; justify-content: flex-end; padding-right: 36px; position: relative; top: 1px; }
.status > svg { flex: none; }
.status > span { flex: none; font-size: 25px; }
.stack { font: 700 12.5px "DejaVu Sans Mono", monospace; fill: #d5d7da; }
.cpu { width: 72px; margin-left: 16px; }
.temp { width: 70px; }
.glyphs { margin-left: 32px; }
.status > .pct { width: 64px; font-size: 23px; margin-left: 26px; }
.date { width: 158px; margin-left: 7px; }
.clock { width: 54px; }
.hairline { height: 2px; flex: none; background: linear-gradient(90deg, #02040a 0 492px, #c3cfe4 493px, #5b7bb0 620px, #1d3e78 1100px, #02050b 1500px); }

.window { height: 1902px; flex: none; box-sizing: border-box; display: flex; flex-direction: column; background: #fff; border-radius: 20px; overflow: hidden; position: relative; }
.window::before { content: ""; position: absolute; inset: 0; height: 214px; border: 2px solid #5b5d68; border-bottom: 0; border-radius: 20px 20px 0 0; box-sizing: border-box; z-index: 2; }
.window::after { content: ""; position: absolute; left: 0; right: 0; bottom: 0; height: 80px; background: linear-gradient(0deg, rgba(0,0,0,.13), rgba(0,0,0,.06) 26px, transparent); -webkit-mask-image: linear-gradient(90deg, transparent 150px, #000 330px, #000 3030px, transparent 3230px); mask-image: linear-gradient(90deg, transparent 150px, #000 330px, #000 3030px, transparent 3230px); }
.tabstrip { height: 76px; flex: none; box-sizing: border-box; background: #0b0b16; display: flex; align-items: flex-end; padding-left: 42px; position: relative; }
.light { width: 24px; height: 24px; border-radius: 50%; margin: 0 16px 25px 0; flex: none; }
.red { background: #ff5f57; } .amber { background: #febc2e; } .green { background: #28c840; }
.tab { height: 60px; display: flex; align-items: center; font-size: 24px; flex: none; box-sizing: border-box; }
.idle { width: 494px; padding-left: 31px; color: #b9bac2; }
.idle .clip { margin: 0 0 2px 15px; width: 403px; overflow: hidden; -webkit-mask-image: linear-gradient(90deg, #000 355px, rgba(0,0,0,.35) 403px); mask-image: linear-gradient(90deg, #000 355px, rgba(0,0,0,.35) 403px); }
.active { width: 480px; padding-left: 18px; background: #313444; border-radius: 9px 9px 0 0; color: #fff; }
.tabtitle { margin: 0 0 2px 18px; width: 383px; }
.tabtitle span { font-weight: 500; }
.plus { margin: 0 0 18px 32px; }
.chevron { margin: 0 30px 22px auto; }
.toolbar { height: 72px; flex: none; display: flex; align-items: center; background: #313444; box-sizing: border-box; }
.toolbar .nav { flex: none; }
.omnibox { width: 2160px; height: 56px; border-radius: 8px; background: #191b23; display: flex; align-items: center; box-sizing: border-box; padding-left: 28px; font-size: 26px; flex: none; }
.url { margin-left: 24px; flex: 1; }
.omni-actions { margin-right: 15px; }
.tools { margin-left: auto; margin-right: 20px; }
.bookmarks { height: 66px; flex: none; display: flex; background: #313444; padding-left: 29px; box-sizing: border-box; font-size: 24px; }
.bookmark { display: flex; align-items: center; gap: 16px; flex: none; height: 56px; }
.bookmark svg { flex: none; }
.bookmark span { padding-bottom: 2px; }
.other { margin-left: auto; width: 288px; height: 32px; margin-top: 12px; padding-right: 0; border-left: 2px solid #55586a; box-sizing: border-box; padding-left: 20px; }

.page { flex: 1; padding: 16px 16px 0; color: #000; font-family: "Liberation Sans", Arial, sans-serif; display: flex; flex-direction: column; }
.banner { height: 202px; flex: none; box-sizing: border-box; background: #808080; border-bottom: 2px solid #e3e3e3; padding: 0 0 2px 20px; display: flex; align-items: center; color: #fff; }
h1 { margin: 0; font-size: 66px; line-height: 76px; }
.form { flex: none; box-sizing: border-box; height: 695px; margin: 20px 20px 0; border: 4px dashed #e4e4e4; display: flex; flex-direction: column; align-items: center; }
h2 { margin: 60px 0 0; font-size: 48px; line-height: 56px; }
.fields { width: 1044px; display: flex; flex-direction: column; margin-top: 59px; }
label { font-size: 32px; line-height: 36px; }
.input { height: 75px; box-sizing: border-box; margin-top: 20px; border: 2px solid #e4e4e4; border-radius: 10px; }
.input + label { margin-top: 61px; }
button { width: 1000px; height: 89px; border: 0; padding: 0 0 2px; border-radius: 10px; background: #e4e4e4; color: #000; font: bold 40px/46px "Liberation Sans", Arial, sans-serif; }
.submit { margin-top: 60px; }
.cards { display: flex; align-items: flex-start; gap: 40px; padding: 20px 40px 0; }
.card { width: 1040px; flex: none; box-sizing: border-box; padding: 20px 20px 40px; border-radius: 10px; background: #fff; box-shadow: 0 4px 8px rgba(0,0,0,.55); }
.card.bare { width: 1026px; padding-bottom: 20px; }
h3 { margin: 0; font-size: 40px; line-height: 46px; padding-bottom: 20px; border-bottom: 4px solid #e4e4e4; }
p { margin: 33px 0 52px; font-size: 32px; line-height: 36px; }
.cursor { position: absolute; left: 991px; top: 783px; filter: drop-shadow(0 2px 2px rgba(0,0,0,.35)); }

.dockrow { flex: none; padding-top: 2px; display: flex; justify-content: center; }
.dock { width: 2964px; height: 136px; box-sizing: border-box; border: 2px solid #3b3e42; border-radius: 46px; padding: 0 4px; display: flex; align-items: stretch;
  background: linear-gradient(90deg, #121316 0, #131518 230px, #14202c 340px, #111c3e 440px, #101b3c 700px, #121c27 920px, #15171b 1150px, #15171b 1400px, #171d2c 1700px, #1a1f30 1850px, #17191d 1980px, #131416 2130px, #213c58 2240px, #2b4a69 2290px, #17335a 2370px, #11233a 2430px, #121519 2640px, #121315 2960px) border-box; }
.cell { width: 114px; height: 132px; flex: none; }
.dot { fill: #9a9da3; }
.mono { font-family: "DejaVu Sans Mono", "Liberation Mono", monospace; }
.sep { width: 2px; height: 100px; margin: 16px 24px; background: #4f5a66; flex: none; }
.sep.wide { margin: 16px 25px; }
</style>
